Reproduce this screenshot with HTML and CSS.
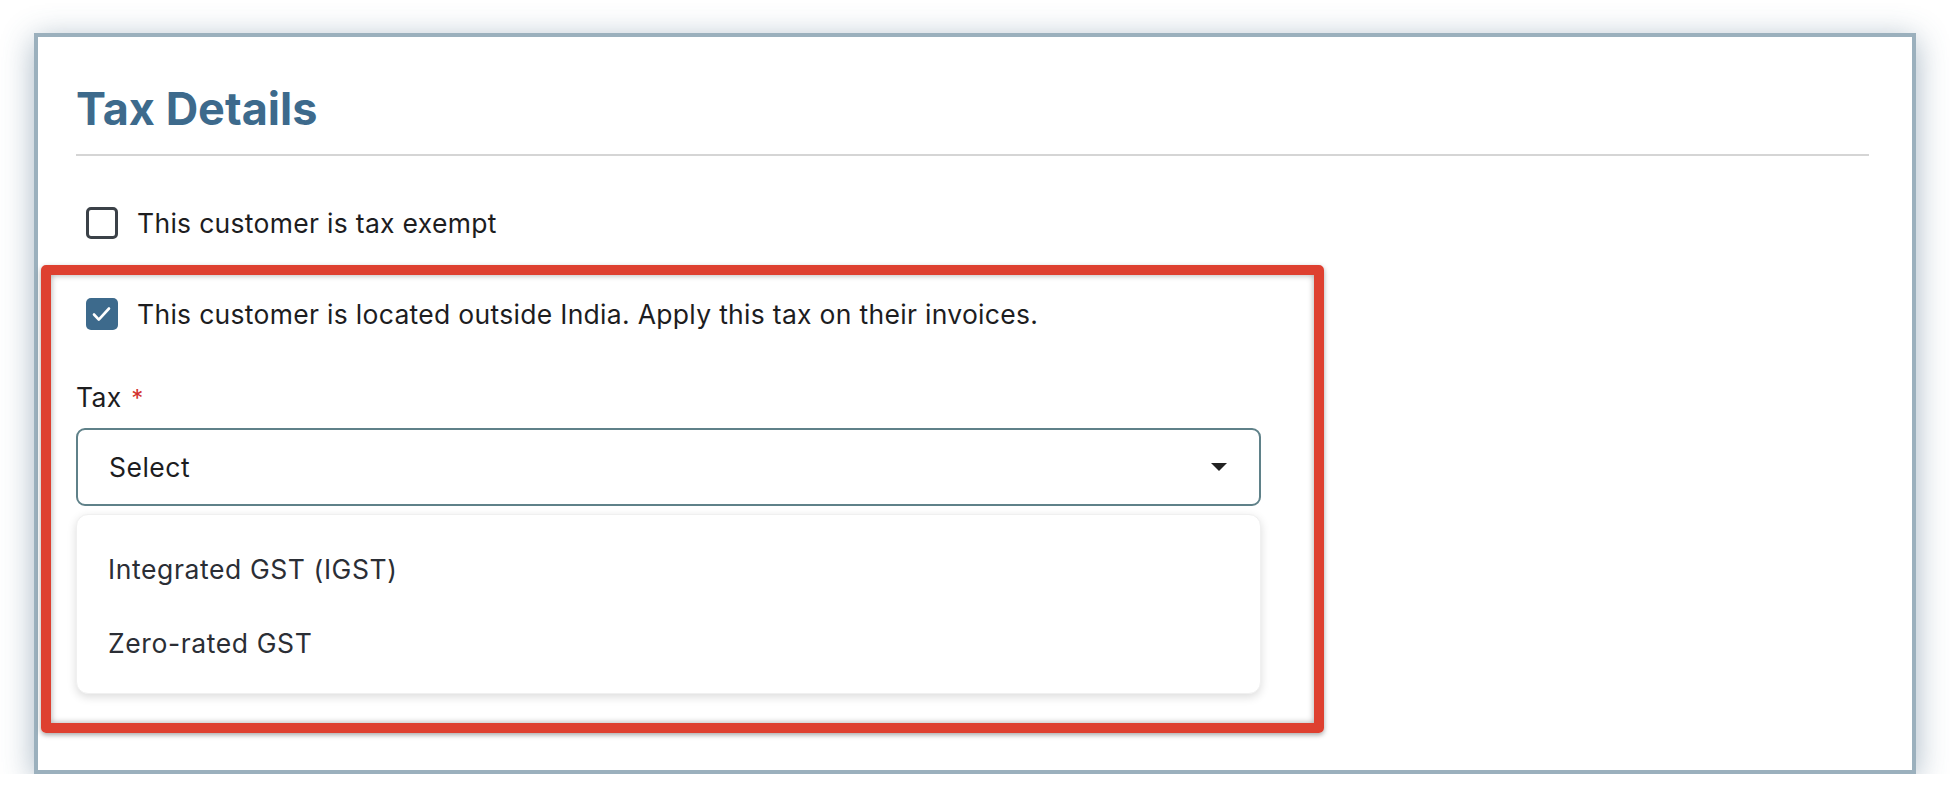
FILE: index.html
```html
<!DOCTYPE html>
<html lang="en">
<head>
  <meta charset="UTF-8" />
  <meta name="viewport" content="width=device-width, initial-scale=1.0" />
  <title>Tax Details</title>
  <link rel="stylesheet" href="styles.css">
</head>
<body>

  <div class="card">
    <h2 class="card-title">Tax Details</h2>

    <label class="check-row">
      <span class="checkbox"></span>
      <span>This customer is tax exempt</span>
    </label>

    <label class="check-row">
      <span class="checkbox checked">
        <svg viewBox="0 0 32 32">
          <path d="M8 16.5 L12.8 21.6 L23 10.5" fill="none" stroke="#fff" stroke-width="2.6"
            stroke-linecap="round" stroke-linejoin="round" />
        </svg>
      </span>
      <span>This customer is located outside India. Apply this tax on their invoices.</span>
    </label>

    <div class="field">
      <div class="field-label">Tax <span class="required">*</span></div>
      <div class="select">
        <span>Select</span>
        <span class="caret"></span>
      </div>
      <ul class="select-menu">
        <li>Integrated GST (IGST)</li>
        <li>Zero-rated GST</li>
      </ul>
    </div>

    <!-- red outline drawn over the outside-India section -->
    <div class="highlight"></div>
  </div>

</body>
</html>
```

FILE: styles.css
```css
body {
  margin: 0;
  background-color: #ffffff;
  font-family: Inter, 'Noto Sans', sans-serif;
  color: #1d1d1f;
}

.card {
  position: relative;
  box-sizing: border-box;
  width: 1882px;
  height: 741px;
  margin: 33px 0 0 34px;
  padding: 44px 43px 0 38px;
  background-color: #ffffff;
  border: 4px solid #9bb0bd;
  box-shadow: 0 6px 30px rgba(60, 95, 125, 0.45);
}

.card-title {
  margin: 0;
  padding-bottom: 17px;
  border-bottom: 2px solid #d5d5d5;
  font-size: 45px;
  line-height: 56px;
  font-weight: 700;
  color: #3d6a8c;
}

.check-row {
  display: flex;
  align-items: center;
  gap: 19px;
  height: 32px;
  margin: 51px 0 0 10px;
  font-size: 26.5px;
  letter-spacing: 0.3px;
  line-height: 32px;
}

.check-row + .check-row {
  margin-top: 59px;
}

.checkbox {
  box-sizing: border-box;
  width: 32px;
  height: 32px;
  flex-shrink: 0;
  border: 3px solid #3b4148;
  border-radius: 5px;
}

.checkbox.checked {
  border: none;
  background-color: #3d6a8c;
}

.checkbox svg {
  display: block;
  width: 32px;
  height: 32px;
}

.field-label {
  margin-top: 51px;
  font-size: 26.5px;
  letter-spacing: 0.3px;
  line-height: 32px;
}

.required {
  margin-left: 2px;
  color: #d2322d;
  font-size: 24px;
}

.select {
  box-sizing: border-box;
  display: flex;
  align-items: center;
  justify-content: space-between;
  width: 1185px;
  height: 78px;
  margin-top: 13px;
  padding: 0 32px 0 31px;
  border: 2px solid #5f8189;
  border-radius: 9px;
  font-size: 26.5px;
  letter-spacing: 0.5px;
}

.caret {
  width: 0;
  height: 0;
  border-left: 8px solid transparent;
  border-right: 8px solid transparent;
  border-top: 8px solid #222222;
}

.select-menu {
  box-sizing: border-box;
  width: 1185px;
  height: 180px;
  margin: 8px 0 0;
  padding: 17px 0 15px;
  list-style: none;
  background-color: #ffffff;
  border: 1px solid #f0f0f0;
  border-radius: 12px;
  box-shadow: 0 3px 10px rgba(0, 0, 0, 0.14);
}

.select-menu li {
  padding-left: 31px;
  font-size: 26.5px;
  letter-spacing: 0.6px;
  line-height: 74px;
  color: #2b2e35;
}

.highlight {
  position: absolute;
  left: 3px;
  top: 228px;
  box-sizing: border-box;
  width: 1283px;
  height: 468px;
  border: 10px solid #de4030;
  border-radius: 5px;
  box-shadow: 0 2px 5px rgba(0, 0, 0, 0.35), inset 0 0 6px rgba(0, 0, 0, 0.35);
  pointer-events: none;
}
```
